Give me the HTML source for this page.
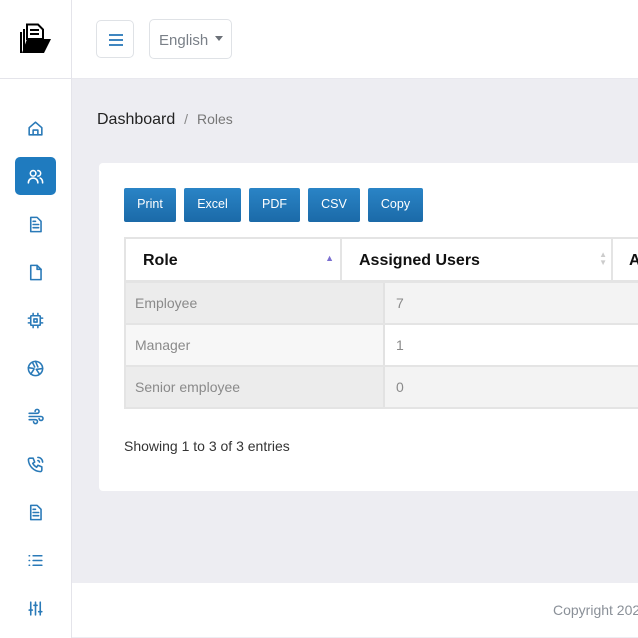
<!DOCTYPE html>
<html><head><meta charset="utf-8">
<style>
*{box-sizing:border-box;margin:0;padding:0}
body{width:638px;height:638px;overflow:hidden;background:#ededf2;font-family:"Liberation Sans",sans-serif;position:relative}
.side{position:absolute;left:0;top:0;width:72px;height:638px;background:#fff;border-right:1px solid #e4e4ea}
.logo{position:absolute;left:0;top:0;width:71px;height:79px;border-bottom:1px solid #e4e4ea}
.ic{position:absolute;left:15px;width:41px;height:38px;display:flex;align-items:center;justify-content:center}
.ic svg{width:19px;height:19px;fill:none;stroke:#2a7ab8;stroke-width:2;stroke-linecap:round;stroke-linejoin:round}
.ic.act{background:#1f7bbf;border-radius:5px}
.ic.act svg{stroke:#fff}
.head{position:absolute;left:72px;top:0;width:566px;height:79px;background:#fff;border-bottom:1px solid #e8e8ee}
.mbtn{position:absolute;left:24px;top:20px;width:38px;height:38px;border:1px solid #dfe2e6;border-radius:5px}
.mbtn i{position:absolute;left:12px;width:14px;height:2px;background:#3f86c0}
.lang{position:absolute;left:77px;top:19px;width:83px;height:40px;border:1px solid #dfe2e6;border-radius:5px;color:#7a8088;font-size:15px;padding:12px 0 0 9px}
.lang:after{content:"";position:absolute;right:8px;top:16px;border:4px solid transparent;border-top:5px solid #6c7178}
.bc{position:absolute;left:97px;top:111px;font-size:16px;color:#222}
.bc span{color:#777;font-size:14px}
.card{position:absolute;left:99px;top:163px;width:560px;height:328px;background:#fff;border-radius:4px}
.btn{position:absolute;top:188px;height:34px;background:linear-gradient(#2a84c6,#1b6aa8);color:#fff;font-size:12.5px;text-align:center;line-height:32px;border-radius:2px}
.th{position:absolute;top:237px;height:46px;border:2px solid #e4e4e4;border-bottom:3px solid #e4e4e4;background:#fff;font-weight:bold;font-size:16px;color:#111;padding:13px 0 0 17px}
.row{position:absolute;left:124px;width:520px;height:42px;font-size:14px;color:#8a8a8a;border-bottom:2px solid #e4e4e4}
.row div{position:absolute;top:0;height:40px;padding:12px 0 0 9px}
.foot{position:absolute;left:72px;top:583px;width:566px;height:54px;background:#fff;color:#8a9098;font-size:14px}
</style></head><body>
<div class="side">
 <div class="logo">
  <svg width="34" height="32" viewBox="0 0 34 32" style="position:absolute;left:19px;top:23px;overflow:visible">
   <path d="M8 1.5h11l5 5V16H8z" fill="#fff" stroke="#000" stroke-width="2"/>
   <path d="M11 7h9M11 11h9" stroke="#000" stroke-width="2"/>
   <path d="M5 6v21" stroke="#000" stroke-width="2"/>
   <path d="M2 9v21" stroke="#000" stroke-width="2"/>
   <path d="M3 30l5-14h24l-7 14z" fill="#000"/>
  </svg>
 </div>
 <div class="ic" style="top:109px"><svg viewBox="0 0 24 24"><path d="M4 11l8-7 8 7v9H4z"/><path d="M9 20v-6h6v6"/></svg></div>
 <div class="ic act" style="top:157px"><svg viewBox="0 0 24 24"><circle cx="9" cy="8" r="3.5"/><path d="M3 20c0-4 3-6 6-6s6 2 6 6"/><path d="M15 4.5a3.5 3.5 0 010 7M18 14c2 1 3 3 3 6"/></svg></div>
 <div class="ic" style="top:205px"><svg viewBox="0 0 24 24"><path d="M6 3h8l5 5v13H6z"/><path d="M9 12h7M9 16h7M9 8h3"/></svg></div>
 <div class="ic" style="top:253px"><svg viewBox="0 0 24 24"><path d="M6 3h8l5 5v13H6z"/><path d="M14 3v5h5"/></svg></div>
 <div class="ic" style="top:301px"><svg viewBox="0 0 24 24"><rect x="6" y="6" width="12" height="12" rx="1"/><rect x="10" y="10" width="4" height="4"/><path d="M9 3v3M15 3v3M9 18v3M15 18v3M3 9h3M3 15h3M18 9h3M18 15h3"/></svg></div>
 <div class="ic" style="top:349px"><svg viewBox="0 0 24 24"><circle cx="12" cy="12" r="9"/><path d="M12 3l3 7M21 12l-7 1M17 19l-4-6M6 19l4-6M3 11l7 1M8 4l3 6"/></svg></div>
 <div class="ic" style="top:397px"><svg viewBox="0 0 24 24"><path d="M4 8h10a2.5 2.5 0 10-2.5-2.5M4 12h15a2.5 2.5 0 11-2.5 2.5M4 16h8a2.5 2.5 0 11-2.5 2.5"/></svg></div>
 <div class="ic" style="top:445px"><svg viewBox="0 0 24 24"><path d="M5 4h4l2 5-2.5 1.5a11 11 0 005 5L15 13l5 2v4a2 2 0 01-2 2A16 16 0 013 6a2 2 0 012-2"/><path d="M15 7a2 2 0 012 2M15 3a6 6 0 016 6"/></svg></div>
 <div class="ic" style="top:493px"><svg viewBox="0 0 24 24"><path d="M6 3h8l5 5v13H6z"/><path d="M9 12h7M9 16h7M9 8h3"/></svg></div>
 <div class="ic" style="top:541px"><svg viewBox="0 0 24 24"><path d="M9 6h11M9 12h11M9 18h11M4 6h.5M4 12h.5M4 18h.5"/></svg></div>
 <div class="ic" style="top:589px"><svg viewBox="0 0 24 24"><path d="M6 4v16M12 4v16M18 4v16M4 14h4M10 8h4M16 16h4"/></svg></div>
</div>
<div class="head">
 <div class="mbtn"><i style="top:13px"></i><i style="top:18px"></i><i style="top:23px"></i></div>
 <div class="lang">English</div>
</div>
<div class="bc">Dashboard &nbsp;<span style="color:#888">/</span>&nbsp; <span>Roles</span></div>
<div class="card"></div>
<div class="btn" style="left:124px;width:52px">Print</div>
<div class="btn" style="left:184px;width:57px">Excel</div>
<div class="btn" style="left:249px;width:51px">PDF</div>
<div class="btn" style="left:308px;width:52px">CSV</div>
<div class="btn" style="left:368px;width:55px">Copy</div>
<div class="th" style="left:124px;width:218px">Role<span style="position:absolute;right:6px;top:14px;font-size:9px;color:#7b6fd0">▲</span></div>
<div class="th" style="left:340px;width:273px">Assigned Users<span style="position:absolute;right:4px;top:12px;font-size:8px;color:#ccc;line-height:8px">▲<br>▼</span></div>
<div class="th" style="left:611px;width:40px;padding-left:16px">A</div>
<div class="row" style="top:283px;background:#f3f3f3;border-left:2px solid #e4e4e4"><div style="left:0;width:259px;background:#ececec;border-right:2px solid #e2e2e2">Employee</div><div style="left:261px">7</div></div>
<div class="row" style="top:325px;background:#fff;border-left:2px solid #e4e4e4"><div style="left:0;width:259px;background:#f7f7f7;border-right:2px solid #e2e2e2">Manager</div><div style="left:261px">1</div></div>
<div class="row" style="top:367px;background:#f3f3f3;border-left:2px solid #e4e4e4"><div style="left:0;width:259px;background:#ececec;border-right:2px solid #e2e2e2">Senior employee</div><div style="left:261px">0</div></div>
<div style="position:absolute;left:124px;top:438px;font-size:14px;color:#333">Showing 1 to 3 of 3 entries</div>
<div class="foot"><span style="position:absolute;left:481px;top:19px;white-space:nowrap">Copyright 2024</span></div>
</body></html>
